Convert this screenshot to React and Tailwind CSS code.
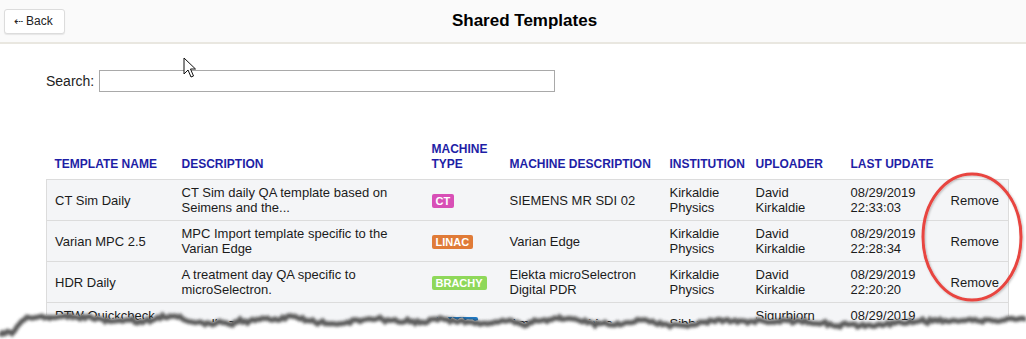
import React from "react";

const rows = [
  {
    name: "CT Sim Daily",
    desc: "CT Sim daily QA template based on Seimens and the...",
    type: "CT",
    typeCls: "bg-[#d84fb6]",
    mdesc: "SIEMENS MR SDI 02",
    inst: "Kirkaldie Physics",
    up: "David Kirkaldie",
    date: "08/29/2019 22:33:03",
  },
  {
    name: "Varian MPC 2.5",
    desc: "MPC Import template specific to the Varian Edge",
    type: "LINAC",
    typeCls: "bg-[#e07b38]",
    mdesc: "Varian Edge",
    inst: "Kirkaldie Physics",
    up: "David Kirkaldie",
    date: "08/29/2019 22:28:34",
  },
  {
    name: "HDR Daily",
    desc: "A treatment day QA specific to microSelectron.",
    type: "BRACHY",
    typeCls: "bg-[#8fd85a]",
    mdesc: "Elekta microSelectron Digital PDR",
    inst: "Kirkaldie Physics",
    up: "David Kirkaldie",
    date: "08/29/2019 22:20:20",
  },
  {
    name: "PTW Quickcheck webline",
    desc: "A really good template",
    type: "OTHER",
    typeCls: "bg-[#1f7cc9]",
    mdesc: "Amazing machine",
    inst: "Sibba corp",
    up: "Sigurbjorn Sigurdsson",
    date: "08/29/2019 21:56:40",
  },
];

const heads = [
  "TEMPLATE NAME",
  "DESCRIPTION",
  "MACHINE TYPE",
  "MACHINE DESCRIPTION",
  "INSTITUTION",
  "UPLOADER",
  "LAST UPDATE",
  "",
];

function tornPoints() {
  const base = [
    [0, 332], [12, 330], [22, 318], [50, 313], [100, 316], [150, 319], [175, 313],
    [200, 322], [250, 318], [300, 315], [330, 322], [380, 317], [420, 320],
    [440, 316], [480, 320], [510, 317], [522, 322], [560, 315], [600, 322],
    [640, 318], [680, 323], [720, 317], [760, 319], [800, 320], [840, 323],
    [900, 321], [930, 318], [970, 317], [1000, 319], [1026, 316],
  ];
  let seed = 11;
  const rnd = () => {
    seed = (seed * 9301 + 49297) % 233280;
    return seed / 233280;
  };
  const pts = [];
  let drift = 0;
  for (let i = 0; i < base.length - 1; i++) {
    const [x0, y0] = base[i];
    const [x1, y1] = base[i + 1];
    for (let x = x0; x < x1; x += 2.5) {
      const t = (x - x0) / (x1 - x0);
      drift = drift * 0.7 + (rnd() - 0.5) * 2.5;
      const y = y0 + (y1 - y0) * t + drift + (rnd() - 0.5) * 3;
      pts.push([x, y - 300]);
    }
  }
  pts.push([1026, 16]);
  return pts;
}

function Torn() {
  const pts = tornPoints();
  const line = pts.map((p) => p[0].toFixed(1) + "," + p[1].toFixed(1)).join(" ");
  const poly = line + " 1026,39 0,39";
  return (
    <svg
      className="absolute left-0 top-[300px]"
      width="1026"
      height="39"
      viewBox="0 0 1026 39"
    >
      <defs>
        <filter id="blur" x="-5%" y="-50%" width="110%" height="200%">
          <feGaussianBlur stdDeviation="1.5" />
        </filter>
      </defs>
      <polygon points={poly} fill="#ffffff" />
      <polyline
        points={line}
        fill="none"
        stroke="#333333"
        strokeWidth="5"
        opacity="0.8"
        filter="url(#blur)"
        transform="translate(0 2.5)"
      />
    </svg>
  );
}

function Cursor() {
  return (
    <svg
      className="absolute left-[183px] top-[57px]"
      width="14"
      height="22"
      viewBox="0 0 14 22"
    >
      <path
        d="M1 1 L1 17 L5 13 L8 20 L10.5 19 L7.5 12 L12.5 12 Z"
        fill="#ffffff"
        stroke="#111111"
        strokeWidth="1"
        strokeLinejoin="round"
      />
    </svg>
  );
}

function Ellipse() {
  return (
    <svg
      className="absolute left-[916px] top-[168px]"
      width="110"
      height="140"
      viewBox="0 0 110 140"
    >
      <defs>
        <filter id="es" x="-20%" y="-20%" width="140%" height="140%">
          <feDropShadow dx="1" dy="1" stdDeviation="1" floodColor="#000" floodOpacity="0.25" />
        </filter>
      </defs>
      <ellipse
        cx="56"
        cy="69"
        rx="49"
        ry="63"
        fill="none"
        stroke="#e8443f"
        strokeWidth="3"
        filter="url(#es)"
      />
    </svg>
  );
}

export default function App() {
  return (
    <div
      className="relative h-[339px] w-[1026px] overflow-hidden bg-white text-[#1b1b1b]"
      style={{ fontFamily: '"Liberation Sans", Arial, sans-serif' }}
    >
      <div className="flex h-[44px] items-center border-b-2 border-[#e9e7e0] bg-[#fafafa] pl-[4px] pr-[42px]">
        <button className="flex h-[25px] w-[61px] items-center rounded-[3px] border border-[#dcdcdc] bg-white pl-[9px] text-[12px] text-[#222] shadow-[0_1px_1px_rgba(0,0,0,0.08)]">
          <span className="mr-[3px] text-[11px]">⇠</span>Back
        </button>
        <div className="flex-1 text-center text-[17px] font-bold text-black">
          Shared Templates
        </div>
      </div>

      <div className="pl-[46px] pr-[18px]">
        <div className="mt-[26px] flex items-center">
          <span className="mr-[5px] text-[14px] text-[#222]">Search:</span>
          <input className="h-[22px] w-[456px] border border-[#a9a9a9] bg-white outline-none" />
        </div>

        <table className="mt-[48px] w-[962px] table-fixed border-collapse text-[13px] leading-[15px]">
          <colgroup>
            <col className="w-[127px]" />
            <col className="w-[250px]" />
            <col className="w-[78px]" />
            <col className="w-[160px]" />
            <col className="w-[86px]" />
            <col className="w-[95px]" />
            <col className="w-[100px]" />
            <col className="w-[66px]" />
          </colgroup>
          <thead>
            <tr>
              {heads.map((h, i) => (
                <th
                  key={i}
                  className="pb-[7px] pl-[8px] pt-[2px] text-left align-bottom text-[12px] font-bold leading-[15px] text-[#1e1ea6]"
                >
                  {h}
                </th>
              ))}
            </tr>
          </thead>
          <tbody>
            {rows.map((r, i) => (
              <tr
                key={i}
                className="border border-[#dcdcdc] bg-[#f4f5f7]"
              >
                <td className="h-[40px] py-[5px] pl-[8px] pr-[6px] align-middle">{r.name}</td>
                <td className="py-[5px] pl-[8px] align-middle">{r.desc}</td>
                <td className="py-[5px] pl-[8px] align-middle">
                  <span
                    className={
                      "inline-block rounded-[2px] px-[4px] text-[11px] font-bold leading-[14px] text-white " +
                      r.typeCls
                    }
                  >
                    {r.type}
                  </span>
                </td>
                <td className="py-[5px] pl-[8px] align-middle">{r.mdesc}</td>
                <td className="py-[5px] pl-[8px] align-middle">{r.inst}</td>
                <td className="py-[5px] pl-[8px] pr-[6px] align-middle">{r.up}</td>
                <td className="py-[5px] pl-[8px] align-middle">{r.date}</td>
                <td className="py-[5px] pr-[9px] text-right align-middle">Remove</td>
              </tr>
            ))}
          </tbody>
        </table>
      </div>

      <Cursor />
      <Ellipse />
      <Torn />
    </div>
  );
}
